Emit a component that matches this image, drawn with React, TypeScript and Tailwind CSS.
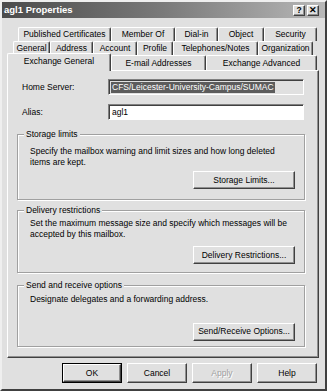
import React from "react";

type Tab = { label: string; w: string };

const row1: Tab[] = [
  { label: "Published Certificates", w: "w-[93px]" },
  { label: "Member Of", w: "w-[64px]" },
  { label: "Dial-in", w: "w-[43px]" },
  { label: "Object", w: "w-[46px]" },
  { label: "Security", w: "w-[53px]" },
];
const row2: Tab[] = [
  { label: "General", w: "w-[37px]" },
  { label: "Address", w: "w-[43px]" },
  { label: "Account", w: "w-[44px]" },
  { label: "Profile", w: "w-[36px]" },
  { label: "Telephones/Notes", w: "w-[85px]" },
  { label: "Organization", w: "w-[55px]" },
];

const tabCls =
  "flex items-center justify-center whitespace-nowrap border-t border-l border-r border-t-white border-l-white border-r-[#404040] rounded-t-[2px] shadow-[inset_-1px_0_0_#909090] bg-[#e0e0e0] leading-none";

function TabRow({ tabs, cls }: { tabs: Tab[]; cls: string }) {
  return (
    <div className={"flex h-[14px] " + cls}>
      {tabs.map((t) => (
        <div key={t.label} className={tabCls + " h-[14px] " + t.w}>
          {t.label}
        </div>
      ))}
    </div>
  );
}

const btnCls =
  "flex items-center justify-center whitespace-nowrap bg-[#e0e0e0] border border-t-white border-l-white border-r-[#404040] border-b-[#404040] shadow-[inset_-1px_-1px_0_#909090] leading-none";

function Group({
  title,
  h,
  pt,
  lines,
  btnMt,
  btn,
  mt,
}: {
  title: string;
  h: string;
  pt: string;
  lines: string[];
  btnMt: string;
  btn: string;
  mt: string;
}) {
  return (
    <div
      className={
        "relative ml-[9px] mr-[13px] border border-[#a0a0a0] shadow-[1px_1px_0_#ffffff,inset_1px_1px_0_#ffffff] flex flex-col " +
        h +
        " " +
        pt +
        " " +
        mt
      }
    >
      <div className="absolute left-[6px] -top-[6px] px-[2px] bg-[#e0e0e0] leading-[11px] whitespace-nowrap">
        {title}
      </div>
      <div className="pl-[12px] leading-[10.5px]">
        {lines.map((l) => (
          <div key={l} className="whitespace-nowrap">
            {l}
          </div>
        ))}
      </div>
      <div className={"flex justify-end pr-[9px] " + btnMt}>
        <div className={btnCls + " w-[102px] h-[18px]"}>{btn}</div>
      </div>
    </div>
  );
}

export default function App() {
  return (
    <div className="w-[327px] h-[391px] box-border bg-[#e0e0e0] border-[2px] border-t-[#efefef] border-l-[#efefef] border-r-[#404040] border-b-[#404040] flex flex-col overflow-hidden font-['Liberation_Sans',Arial,sans-serif] text-[8.5px] text-black">
      {/* Title bar */}
      <div className="h-[16px] flex items-center justify-between pl-[2px] pr-[6px] bg-linear-to-r from-[#4c4c4c] via-[#7a7a7a] to-[#b8b8b8]">
        <span className="text-white font-bold text-[9.5px] leading-none">agl1 Properties</span>
        <div className="flex gap-[1px]">
          <div className={btnCls + " w-[12px] h-[11px] font-bold text-[8.5px]"}>?</div>
          <div className={btnCls + " w-[12px] h-[11px] font-bold text-[8.5px] ml-[1px]"}>✕</div>
        </div>
      </div>

      {/* Body */}
      <div className="flex flex-col pl-[5px] pr-[6px] pt-[9px]">
        <TabRow tabs={row1} cls="ml-[11px]" />
        <TabRow tabs={row2} cls="ml-[6px]" />
        <div className="flex items-end h-[17px] -mt-[2px] relative z-10">
          <div className="relative z-10 w-[104px] h-[18px] -mb-px flex items-start pt-[3px] justify-center border-t border-l border-r border-t-white border-l-white border-r-[#404040] rounded-t-[2px] shadow-[inset_-1px_0_0_#909090] bg-[#e0e0e0] leading-none whitespace-nowrap">
            Exchange General
          </div>
          <div className={tabCls + " h-[15px] w-[95px]"}>E-mail Addresses</div>
          <div className={tabCls + " h-[15px] w-[111px]"}>Exchange Advanced</div>
        </div>

        {/* Panel */}
        <div className="h-[288px] border border-t-white border-l-white border-r-[#404040] border-b-[#404040] shadow-[inset_-1px_-1px_0_#909090] flex flex-col">
          <div className="mt-[8px] flex items-center pl-[14px]">
            <div className="w-[86px]">Home Server:</div>
            <div className="w-[196px] h-[16px] flex items-center pl-[2px] border border-t-[#808080] border-l-[#808080] border-b-white border-r-white shadow-[inset_1px_1px_0_#404040] bg-[#e0e0e0]">
              <span className="bg-[#5c5c5c] text-white px-[1px] leading-[11px] whitespace-nowrap">
                CFS/Leicester-University-Campus/SUMAC
              </span>
            </div>
          </div>
          <div className="mt-[9px] flex items-center pl-[14px]">
            <div className="w-[86px]">Alias:</div>
            <div className="w-[196px] h-[16px] flex items-center pl-[3px] border border-t-[#808080] border-l-[#808080] border-b-white border-r-white shadow-[inset_1px_1px_0_#404040] bg-white">
              agl1
            </div>
          </div>

          <Group
            title="Storage limits"
            mt="mt-[14px]"
            h="h-[66px]"
            pt="pt-[11px]"
            lines={[
              "Specify the mailbox warning and limit sizes and how long deleted",
              "items are kept.",
            ]}
            btnMt="mt-[4px]"
            btn="Storage Limits..."
          />
          <Group
            title="Delivery restrictions"
            mt="mt-[10px]"
            h="h-[63px]"
            pt="pt-[7px]"
            lines={[
              "Set the maximum message size and specify which messages will be",
              "accepted by this mailbox.",
            ]}
            btnMt="mt-[7px]"
            btn="Delivery Restrictions..."
          />
          <Group
            title="Send and receive options"
            mt="mt-[12px]"
            h="h-[62px]"
            pt="pt-[8px]"
            lines={["Designate delegates and a forwarding address."]}
            btnMt="mt-[18px]"
            btn="Send/Receive Options..."
          />
        </div>

        {/* Dialog buttons */}
        <div className="mt-[5px] flex justify-end gap-[5px] pr-[2px]">
          <div className="w-[60px] h-[20px] border border-black flex">
            <div className={btnCls + " flex-1"}>OK</div>
          </div>
          <div className={btnCls + " w-[60px] h-[20px]"}>Cancel</div>
          <div className={btnCls + " w-[60px] h-[20px] text-[#a0a0a0] [text-shadow:1px_1px_0_#ffffff]"}>
            Apply
          </div>
          <div className={btnCls + " w-[60px] h-[20px]"}>Help</div>
        </div>
      </div>
    </div>
  );
}
